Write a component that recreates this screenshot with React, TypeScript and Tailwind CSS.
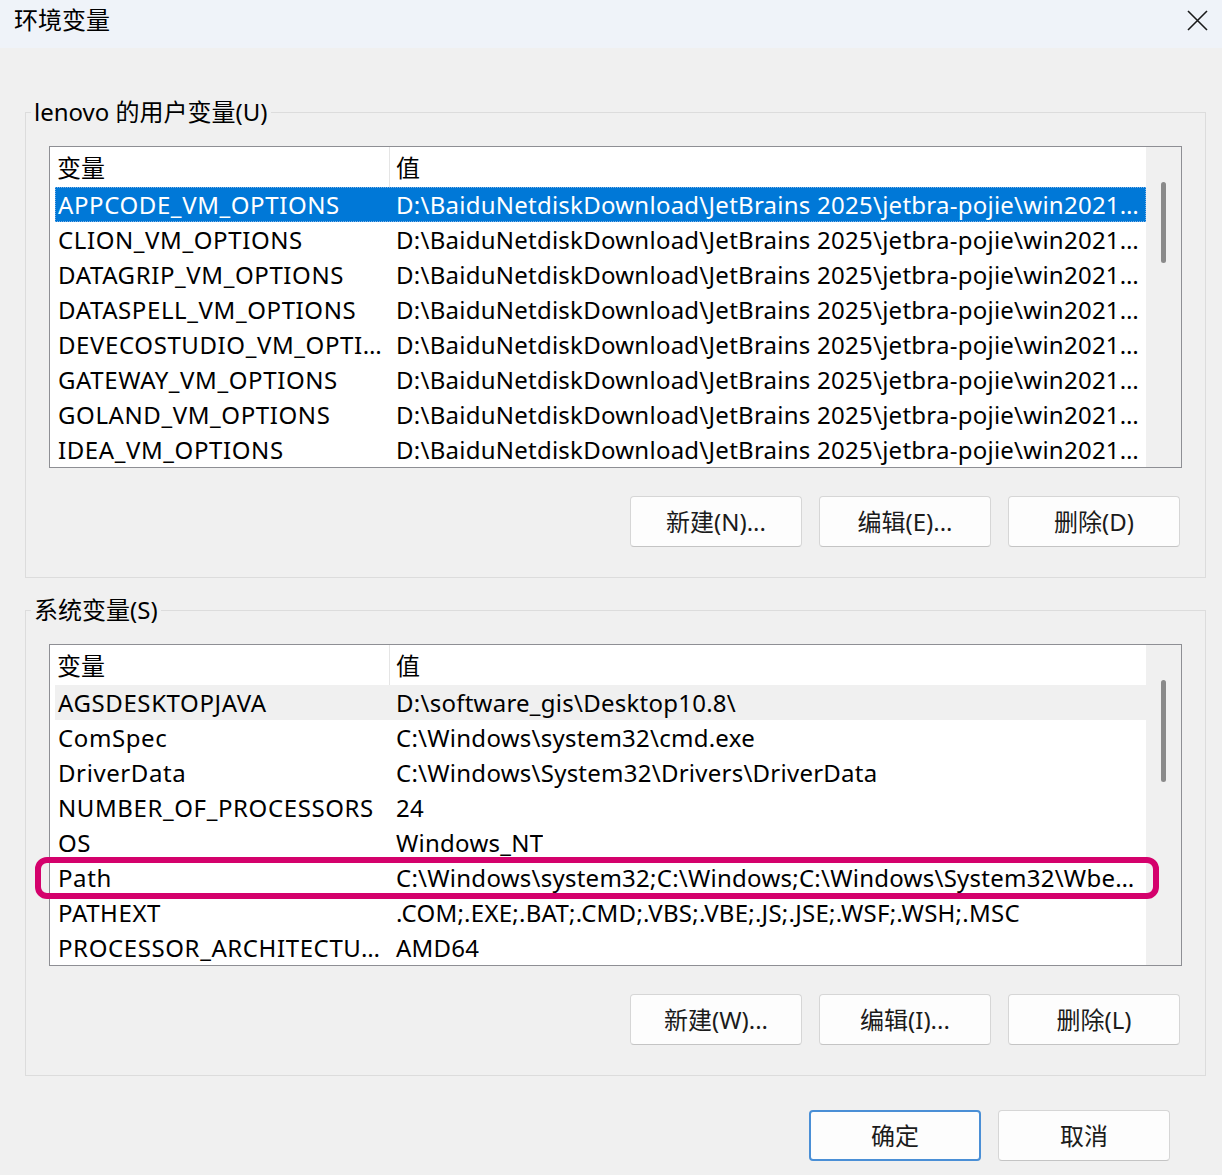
const userVars: [string, string][] = [
  ["APPCODE_VM_OPTIONS", "D:\\BaiduNetdiskDownload\\JetBrains 2025\\jetbra-pojie\\win2021…"],
  ["CLION_VM_OPTIONS", "D:\\BaiduNetdiskDownload\\JetBrains 2025\\jetbra-pojie\\win2021…"],
  ["DATAGRIP_VM_OPTIONS", "D:\\BaiduNetdiskDownload\\JetBrains 2025\\jetbra-pojie\\win2021…"],
  ["DATASPELL_VM_OPTIONS", "D:\\BaiduNetdiskDownload\\JetBrains 2025\\jetbra-pojie\\win2021…"],
  ["DEVECOSTUDIO_VM_OPTI…", "D:\\BaiduNetdiskDownload\\JetBrains 2025\\jetbra-pojie\\win2021…"],
  ["GATEWAY_VM_OPTIONS", "D:\\BaiduNetdiskDownload\\JetBrains 2025\\jetbra-pojie\\win2021…"],
  ["GOLAND_VM_OPTIONS", "D:\\BaiduNetdiskDownload\\JetBrains 2025\\jetbra-pojie\\win2021…"],
  ["IDEA_VM_OPTIONS", "D:\\BaiduNetdiskDownload\\JetBrains 2025\\jetbra-pojie\\win2021…"],
];

const sysVars: [string, string][] = [
  ["AGSDESKTOPJAVA", "D:\\software_gis\\Desktop10.8\\"],
  ["ComSpec", "C:\\Windows\\system32\\cmd.exe"],
  ["DriverData", "C:\\Windows\\System32\\Drivers\\DriverData"],
  ["NUMBER_OF_PROCESSORS", "24"],
  ["OS", "Windows_NT"],
  ["Path", "C:\\Windows\\system32;C:\\Windows;C:\\Windows\\System32\\Wbe…"],
  ["PATHEXT", ".COM;.EXE;.BAT;.CMD;.VBS;.VBE;.JS;.JSE;.WSF;.WSH;.MSC"],
  ["PROCESSOR_ARCHITECTU…", "AMD64"],
];

const Btn = ({ label, primary }: { label: string; primary?: boolean }) => (
  <button
    className={
      "w-[172px] h-[51px] rounded-[4px] bg-[#fdfdfd] text-[24px] text-[#1b1b1b] " +
      (primary
        ? "border-2 border-[#4a8fd6]"
        : "border border-[#d6d6d6] border-b-[#c4c4c4]")
    }
  >
    {label}
  </button>
);

const VarList = ({
  rows,
  selected,
  hover,
  marked,
  thumbHeight,
}: {
  rows: [string, string][];
  selected?: number;
  hover?: number;
  marked?: number;
  thumbHeight: string;
}) => (
  <div className="relative flex border border-[#8e8f94] bg-white h-[322px]">
    <div className="flex-1 pl-[5px] min-w-0">
      <div className="flex h-[40px] items-center">
        <div className="w-[334px] pl-[2px] pt-[2px]">变量</div>
        <div className="w-px h-full bg-[#e5e5e5]" />
        <div className="pl-[6px] pt-[2px]">值</div>
      </div>
      {rows.map(([name, value], i) => (
        <div
          key={name}
          className={
            "relative flex h-[35px] items-center whitespace-nowrap " +
            (i === selected
              ? "bg-[#0078d7] text-white outline-1 outline-dotted outline-[#7fb2e6] -outline-offset-1"
              : i === hover
              ? "bg-[#f0f0f0]"
              : "")
          }
        >
          <div className="w-[335px] pl-[3px] overflow-hidden tracking-[0.6px]">{name}</div>
          <div className="pl-[6px] overflow-hidden tracking-[0.25px]">{value}</div>
          {i === marked && (
            <div className="absolute left-[-20px] top-[-3px] w-[1124px] h-[42px] border-[6px] border-[#d4016c] rounded-[12px]" />
          )}
        </div>
      ))}
    </div>
    <div className="w-[35px] bg-[#f0f0f0] flex justify-center">
      <div className={"mt-[35px] w-[5px] rounded-full bg-[#8a8a8a] " + thumbHeight} />
    </div>
  </div>
);

export default function App() {
  return (
    <div
      className="w-[1222px] h-[1175px] bg-[#f0f0f0] text-[24px] text-black overflow-hidden"
      style={{ fontFamily: "'Noto Sans', 'Noto Sans CJK SC', sans-serif" }}
    >
      <div className="h-[48px] bg-[#eff3f9] flex items-start justify-between pl-[14px] pr-[14px]">
        <span className="leading-[40px]">环境变量</span>
        <svg className="mt-[10px]" width="21" height="21" viewBox="0 0 21 21" fill="none" stroke="#1a1a1a" strokeWidth="1.6">
          <path d="M1 1L20 20M20 1L1 20" />
        </svg>
      </div>

      <div className="pl-[25px] pr-[16px] pt-[48px]">
        <fieldset className="border border-[#dcdcdc] px-[23px] pt-[18px] pb-[30px]">
          <legend className="-ml-[18px] px-[3px] leading-[32px]">lenovo 的用户变量(U)</legend>
          <VarList rows={userVars} selected={0} thumbHeight="h-[81px]" />
          <div className="flex justify-end gap-[17px] mt-[28px] pr-[2px]">
            <Btn label="新建(N)..." />
            <Btn label="编辑(E)..." />
            <Btn label="删除(D)" />
          </div>
        </fieldset>

        <fieldset className="mt-[16px] border border-[#dcdcdc] px-[23px] pt-[18px] pb-[30px]">
          <legend className="-ml-[18px] px-[3px] leading-[32px]">系统变量(S)</legend>
          <VarList rows={sysVars} hover={0} marked={5} thumbHeight="h-[102px]" />
          <div className="flex justify-end gap-[17px] mt-[28px] pr-[2px]">
            <Btn label="新建(W)..." />
            <Btn label="编辑(I)..." />
            <Btn label="删除(L)" />
          </div>
        </fieldset>

        <div className="flex justify-end gap-[17px] mt-[34px] pr-[36px]">
          <Btn label="确定" primary />
          <Btn label="取消" />
        </div>
      </div>
    </div>
  );
}
